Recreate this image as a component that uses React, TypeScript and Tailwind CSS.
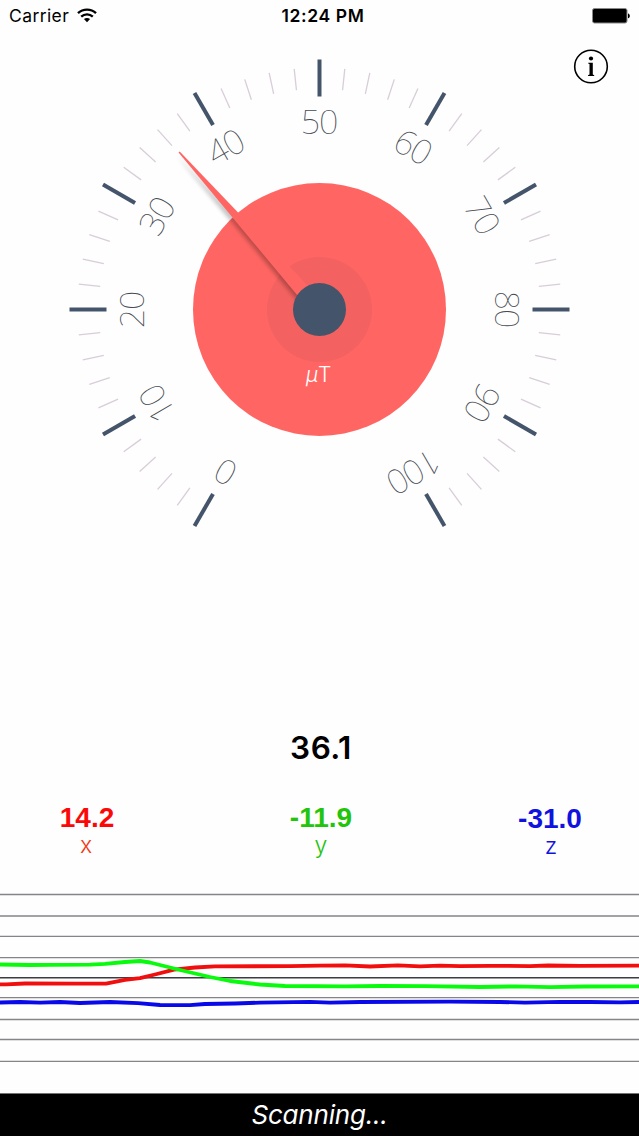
const CX = 319.5;
const CY = 309.5;

const majors = Array.from({ length: 11 }, (_, i) => ({ value: i * 10, angle: -150 + i * 30 }));
const minors = Array.from({ length: 50 }, (_, i) => -150 + i * 6).filter((_, i) => i % 5 !== 0);

function StatusBar() {
  return (
    <header className="grid h-8 grid-cols-3 items-center pl-[9px] pr-[9px] text-black">
      <div className="flex items-center gap-[8px]">
        <span className="text-[17.5px] leading-8 tracking-[0.4px]">Carrier</span>
        <svg width="20" height="15" viewBox="0 0 20 15" className="-mt-0.5" fill="none" stroke="currentColor">
          <path d="M1 5.2C6 .4 14 .4 19 5.2" strokeWidth="2.4" />
          <path d="M4.2 8.6C7.5 5.5 12.5 5.5 15.8 8.6" strokeWidth="2.3" />
          <path d="M10 14.2 6.9 11.1C8.6 9.6 11.4 9.6 13.1 11.1Z" fill="currentColor" stroke="none" />
        </svg>
      </div>
      <span className="pl-[7px] text-center text-[17.5px] font-semibold leading-8 tracking-[0.65px]">12:24 PM</span>
      <svg width="38" height="16" viewBox="0 0 38 16" className="justify-self-end">
        <rect x="0.5" y="0.5" width="34.5" height="14.5" rx="2" fill="#000" stroke="#888" />
        <path d="M36 5.5C38.4 6 38.4 9.8 36 10.3Z" fill="#000" />
      </svg>
    </header>
  );
}

function Gauge({ value }: { value: number }) {
  return (
    <svg width="639" height="528" viewBox="0 32 639 528" className="block shrink-0">
      <defs>
        <filter id="soft" x="-50%" y="-20%" width="200%" height="140%">
          <feGaussianBlur stdDeviation="2" />
        </filter>
      </defs>
      <g stroke="#d8cdd8" strokeWidth="1.3">
        {minors.map((a) => (
          <line key={a} x1={CX} x2={CX} y1={CY - 242} y2={CY - 220.5} transform={`rotate(${a} ${CX} ${CY})`} />
        ))}
      </g>
      {majors.map(({ value: v, angle }) => (
        <g key={v} transform={`rotate(${angle} ${CX} ${CY})`}>
          <line x1={CX} x2={CX} y1={CY - 250} y2={CY - 213} stroke="#44546a" strokeWidth="4" />
          <text x={CX - 0.6} y={CY - 175.5} textAnchor="middle" fill="#454a52" className="font-['Noto_Sans',sans-serif] text-[34px] font-thin tracking-[-1.3px]">
            {v}
          </text>
        </g>
      ))}
      <circle cx={CX} cy={CY} r="126.5" fill="#ff6663" />
      <circle cx={CX} cy={CY} r="52.5" fill="#f36260" />
      <g transform={`translate(-3 3) rotate(${-150 + value * 3} ${CX} ${CY})`}>
        <path d={`M${CX} ${CY - 211}L${CX + 7} ${CY}H${CX - 7}Z`} fill="#000" opacity="0.27" filter="url(#soft)" />
      </g>
      <g transform={`rotate(${-150 + value * 3} ${CX} ${CY})`}>
        <path d={`M${CX - 0.8} ${CY - 211}H${CX + 0.8}L${CX + 8} ${CY}H${CX - 8}Z`} fill="#ff6663" />
      </g>
      <circle cx={CX} cy={CY} r="26.5" fill="#44546a" />
      <text x="318.5" y="382" textAnchor="middle" fill="#fff" className="font-[Inter,sans-serif] text-[21px] font-light">
        <tspan fontStyle="italic">µ</tspan>T
      </text>
      <g>
        <circle cx="591" cy="66.5" r="16.3" fill="none" stroke="#000" strokeWidth="1.6" />
        <circle cx="591" cy="58.5" r="2.1" />
        <path d="M588.2 62.8H592.8V74.5L594.2 75.2V75.9H588V75.2L589.5 74.5V64.1L588.2 63.6Z" />
      </g>
    </svg>
  );
}

const red =
  "0,984.3 6,984.3 25,983.5 75,983.6 106,983.7 125,979.8 140,978.2 155,974.5 174,969.7 195,967.5 215,966.3 290,966.2 320,965.6 345,965.4 370,966.5 398,965.3 420,966.4 440,965.6 460,966.2 490,965.8 530,966.1 548,965.5 580,965.8 639,965.6";
const green =
  "0,964.5 30,965 50,964.8 90,964.7 105,963.8 125,962 140,961 150,962.5 180,970 210,977 230,981 260,984.5 285,986 345,986.4 380,986 425,986.2 480,987 515,986.4 550,987.2 585,986.5 639,986.3";
const blue =
  "0,1002.5 20,1002 40,1002.6 60,1002 80,1003 110,1002 138,1003.2 160,1005 190,1005.2 205,1004 235,1003.5 260,1002.6 310,1001.9 330,1002.7 360,1002 450,1001.6 500,1002 525,1002.6 560,1001.8 590,1002 620,1002.4 639,1002";

function Trace() {
  return (
    <svg width="639" height="212" viewBox="0 881 639 212" className="block shrink-0">
      {[894.5, 916, 936.3, 957.7, 997.7, 1019.5, 1039.5, 1061.3].map((y) => (
        <line key={y} x1="0" x2="639" y1={y} y2={y} stroke="#858589" strokeWidth="1.3" />
      ))}
      <line x1="0" x2="639" y1="977.8" y2="977.8" stroke="#3c3c40" strokeWidth="1.5" />
      <g fill="none" strokeWidth="3.8" strokeLinejoin="round">
        <polyline points={red} stroke="#f10e0e" />
        <polyline points={green} stroke="#08fa0c" />
        <polyline points={blue} stroke="#0808e8" />
      </g>
    </svg>
  );
}

function Axis({ value, name, className, nameClass }: { value: string; name: string; className: string; nameClass: string }) {
  return (
    <div className={`flex flex-col items-center ${className}`}>
      <span className="font-['Liberation_Sans',sans-serif] text-[28px] font-bold leading-[34px]">{value}</span>
      <span className={`-mt-1 text-[23px] font-light leading-7 ${nameClass}`}>{name}</span>
    </div>
  );
}

export default function App() {
  return (
    <main className="flex h-[1136px] w-[639px] flex-col overflow-hidden bg-[#fefefe] font-[Inter,sans-serif]">
      <StatusBar />
      <Gauge value={36.1} />
      <section className="flex h-[321px] flex-col pt-[168px]">
        <p className="pl-[3px] text-center text-[31.5px] font-semibold leading-[40px] tracking-[0.5px] text-black">36.1</p>
        <div className="mt-[33px] grid grid-cols-[174px_294px_164px] text-center">
          <Axis value="14.2" name="x" className="text-[#fb0909]" nameClass="pr-[2px] text-[#f03a16]" />
          <Axis value="-11.9" name="y" className="text-[#22c40c]" nameClass="" />
          <Axis value="-31.0" name="z" className="pt-px text-[#1111e0]" nameClass="pl-[2px]" />
        </div>
      </section>
      <Trace />
      <footer className="flex h-[43px] items-center justify-center border-t border-neutral-500 bg-black pb-0.5 text-[26px] italic tracking-[-0.2px] text-white">
        Scanning...
      </footer>
    </main>
  );
}
